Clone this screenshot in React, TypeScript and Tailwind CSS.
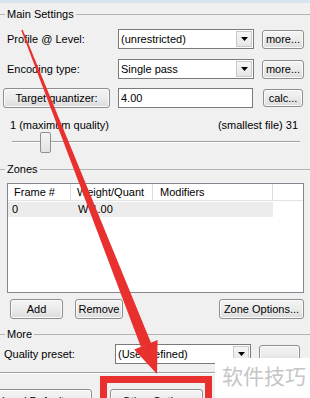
import React from "react";

function Btn({ className = "", children }: { className?: string; children?: React.ReactNode }) {
  return (
    <div
      className={
        "flex items-center justify-center rounded-[3px] border border-[#8e8f8f] bg-gradient-to-b from-[#f4f4f4] via-[#ebebeb] to-[#dcdcdc] shadow-[inset_0_0_0_1px_#fbfbfb] text-black whitespace-nowrap " +
        className
      }
    >
      {children}
    </div>
  );
}

function Combo({ className = "", value }: { className?: string; value: string }) {
  return (
    <div className={"flex h-[20px] items-center border border-[#7a7a7a] bg-white " + className}>
      <span className="flex-1 pl-[2px] whitespace-nowrap overflow-hidden">{value}</span>
      <div className="mr-[1px] flex h-[16px] w-[16px] items-center justify-center border border-[#c9c9c9] bg-gradient-to-b from-[#f6f6f6] to-[#e6e6e6]">
        <svg width="7" height="4" viewBox="0 0 7 4">
          <path d="M0 0 H7 L3.5 4 Z" fill="#000" />
        </svg>
      </div>
    </div>
  );
}

function GroupHeader({ title, className = "" }: { title: string; className?: string }) {
  return (
    <div className={"flex h-[14px] items-center " + className}>
      <div className="h-px w-[5px] bg-[#b4b4b4]" />
      <span className="px-[2px] leading-[14px]">{title}</span>
      <div className="h-px flex-1 bg-[#b4b4b4]" />
    </div>
  );
}

export default function App() {
  return (
    <div className="relative h-[398px] w-[310px] overflow-hidden bg-[#f0f0f0] font-['Liberation_Sans',Arial,sans-serif] text-[11px] text-black">
      <div className="h-[3px] bg-[#d9e4f1]" />

      <GroupHeader title="Main Settings" className="mt-[4px]" />

      <div className="mt-[8px] flex h-[20px] items-center">
        <span className="w-[118px] pl-[7px]">Profile @ Level:</span>
        <Combo className="w-[136px]" value="(unrestricted)" />
        <Btn className="ml-[8px] h-[19px] w-[42px]">more...</Btn>
      </div>

      <div className="mt-[10px] flex h-[20px] items-center">
        <span className="w-[118px] pl-[7px]">Encoding type:</span>
        <Combo className="w-[136px]" value="Single pass" />
        <Btn className="ml-[8px] h-[19px] w-[42px]">more...</Btn>
      </div>

      <div className="mt-[9px] flex h-[20px] items-center pl-[3px]">
        <Btn className="h-[20px] w-[107px]">Target quantizer:</Btn>
        <div className="ml-[8px] flex h-[20px] w-[135px] items-center border border-[#7a7a7a] bg-white pl-[2px]">4.00</div>
        <Btn className="ml-[10px] h-[18px] w-[40px]">calc...</Btn>
      </div>

      <div className="mt-[10px] flex h-[14px] items-center justify-between pl-[10px] pr-[12px]">
        <span>1 (maximum quality)</span>
        <span>(smallest file) 31</span>
      </div>

      <div className="relative ml-[12px] h-[21px] w-[288px] pt-[9px]">
        <div className="h-[2px] border-t border-[#a0a0a0] border-b border-b-white" />
        <div className="absolute left-[28px] top-0 h-[21px] w-[11px] rounded-[2px] border border-[#8e8f8f] bg-gradient-to-b from-[#f4f4f4] to-[#e2e2e2]" />
      </div>

      <GroupHeader title="Zones" className="mt-[9px]" />

      <div className="ml-[7px] mt-[7px] h-[110px] w-[297px] border border-[#828790] bg-white">
        <div className="flex h-[17px] border-b border-[#e3e3e3]">
          <div className="flex w-[63px] items-center border-r border-[#dcdcdc] pl-[6px]">Frame #</div>
          <div className="flex w-[82px] items-center border-r border-[#dcdcdc] pl-[6px]">Weight/Quant</div>
          <div className="flex w-[120px] items-center border-r border-[#dcdcdc] pl-[7px]">Modifiers</div>
          <div className="flex-1" />
        </div>
        <div className="mt-[1px] flex h-[15px] w-[265px] items-center bg-[#ececec]">
          <span className="w-[63px] pl-[4px]">0</span>
          <span className="pl-[7px]">W 1.00</span>
        </div>
      </div>

      <div className="mt-[6px] flex h-[20px] items-center">
        <Btn className="ml-[10px] h-[20px] w-[53px]">Add</Btn>
        <Btn className="ml-[12px] h-[20px] w-[48px]">Remove</Btn>
        <Btn className="ml-auto mr-[6px] h-[20px] w-[85px]">Zone Options...</Btn>
      </div>

      <GroupHeader title="More" className="mt-[8px]" />

      <div className="mt-[3px] flex h-[20px] items-center">
        <span className="w-[115px] pl-[4px]">Quality preset:</span>
        <Combo className="w-[136px]" value="(User defined)" />
        <Btn className="ml-[8px] h-[19px] w-[41px]"> </Btn>
      </div>

      <div className="mt-[8px] h-[2px] border-t border-[#a0a0a0] border-b border-b-white" />

      <div className="mt-[15px] flex h-[22px] items-start">
        <Btn className="ml-[-20px] h-[22px] w-[112px] items-start pt-[3px]">Load Defaults</Btn>
        <Btn className="ml-[18px] h-[22px] w-[93px] items-start pt-[3px]">Other Options</Btn>
      </div>

      {/* red highlight box */}
      <div className="absolute left-[100px] top-[376px] h-[32px] w-[112px] border-[7px] border-[#e8312e]" />

      {/* red arrow */}
      <svg className="pointer-events-none absolute left-0 top-0" width="310" height="398" viewBox="0 0 310 398">
        <polygon points="22.7,29.7 21.3,30.3 140.9,347 151.1,343" fill="#e8312e" />
        <polygon points="157.6,340 134.2,349.6 157,374" fill="#e8312e" />
      </svg>

      {/* watermark */}
      <div className="absolute left-[215px] top-[358px] flex h-[40px] w-[95px] items-start bg-white pl-[7px] pt-[5px]">
        <span className="font-['Noto_Sans_CJK_SC',sans-serif] text-[21px] leading-[24px] text-[#c6c6c6] whitespace-nowrap">软件技巧</span>
      </div>
    </div>
  );
}
